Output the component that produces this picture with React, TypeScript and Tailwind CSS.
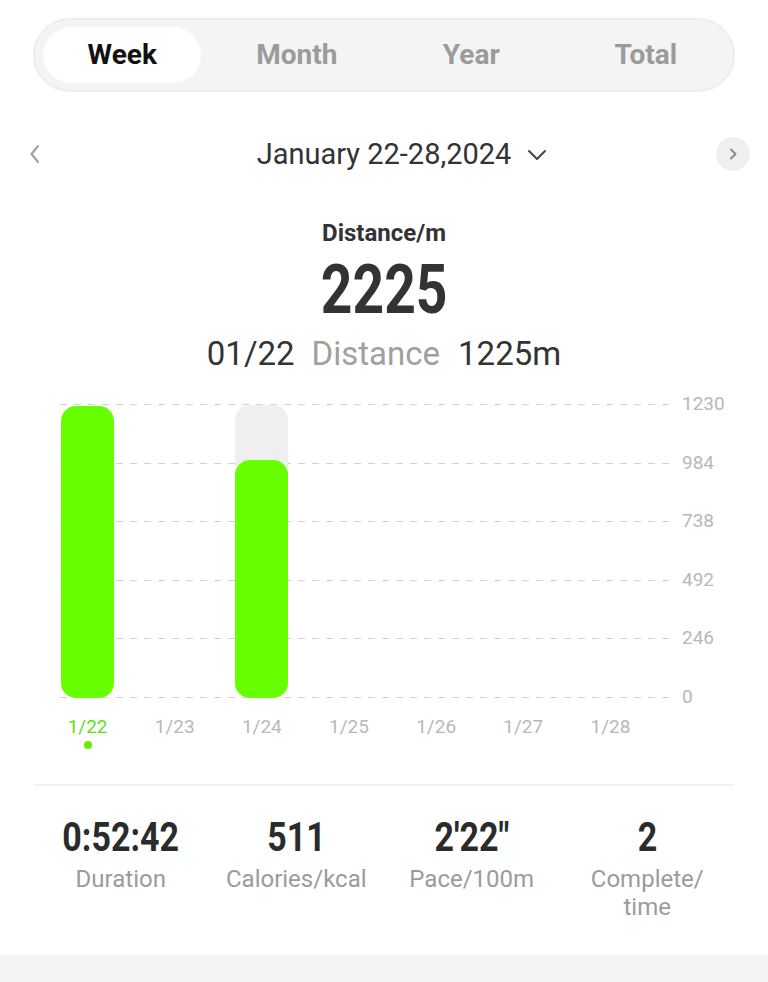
import React from 'react';

const tabs = ['Week', 'Month', 'Year', 'Total'];
const days = [
  { label: '1/22', value: 1225, active: true },
  { label: '1/23', value: 0 },
  { label: '1/24', value: 1000, track: true },
  { label: '1/25', value: 0 },
  { label: '1/26', value: 0 },
  { label: '1/27', value: 0 },
  { label: '1/28', value: 0 },
];
const ticks = ['1230', '984', '738', '492', '246', '0'];
const stats = [
  { value: '0:52:42', label: 'Duration' },
  { value: '511', label: 'Calories/kcal' },
  { value: `2'22"`, label: 'Pace/100m' },
  { value: '2', label: 'Complete/\ntime' },
];

const MAX = 1230;
const PLOT_H = 293;

export default function App() {
  return (
    <div className="w-[768px] h-[982px] bg-white flex flex-col font-['Roboto','Noto_Sans',sans-serif] overflow-hidden">
      {/* period tabs */}
      <div className="pt-[18px] px-[33px]">
        <div className="h-[74px] rounded-full bg-[#f4f4f4] border-2 border-[#ededed] grid grid-cols-4">
          {tabs.map((t, i) => (
            <div key={t} className="flex items-center justify-center">
              <div
                className={`w-[158px] h-[56px] rounded-full flex items-center justify-center text-[28px] leading-[58px] font-bold ${
                  i === 0 ? 'bg-white text-[#111]' : 'text-[#9b9b9b]'
                }`}
              >
                {t}
              </div>
            </div>
          ))}
        </div>
      </div>

      {/* date switcher */}
      <div className="mt-[42px] h-[40px] px-[18px] grid grid-cols-[34px_1fr_34px] items-center">
        <div className="w-[34px] h-[34px] flex items-center justify-center">
          <svg width="12" height="20" viewBox="0 0 12 20" fill="none">
            <path d="M9 2 L2.5 10 L9 18" stroke="#a0a0a0" strokeWidth="2" strokeLinecap="round" strokeLinejoin="round" />
          </svg>
        </div>
        <div className="flex justify-center">
          <span className="relative text-[29px] leading-[40px] text-[#333]">
            January 22-28,2024
            <svg className="absolute left-[calc(100%+16px)] top-[15px]" width="20" height="12" viewBox="0 0 20 12" fill="none">
              <path d="M2 2 L10 10 L18 2" stroke="#444" strokeWidth="2" strokeLinecap="round" strokeLinejoin="round" />
            </svg>
          </span>
        </div>
        <div className="w-[34px] h-[34px] rounded-full bg-[#efefef] flex items-center justify-center">
          <svg width="8" height="12" viewBox="0 0 8 12" fill="none">
            <path d="M2 1.5 L6.5 6 L2 10.5" stroke="#8a8a8a" strokeWidth="2" strokeLinecap="round" strokeLinejoin="round" />
          </svg>
        </div>
      </div>

      {/* summary */}
      <div className="mt-[44px] text-center text-[24px] leading-[30px] font-bold text-[#333]">Distance/m</div>
      <div className="mt-[7px] h-[70px] flex justify-center">
        <div className="scale-x-80 text-[69px] leading-[70px] font-bold text-[#333]">2225</div>
      </div>
      <div className="mt-[9px] h-[40px] flex justify-center items-center text-[33px] leading-[40px] text-[#333]">
        <span>01/22</span>
        <span className="ml-[17px] text-[#a0a0a0]">Distance</span>
        <span className="ml-[18px]">1225m</span>
      </div>

      {/* chart */}
      <div className="mt-[30px] ml-[44px] w-[610px] relative">
        <div className="absolute left-[16px] top-0 w-[610px] h-[294px] flex flex-col justify-between">
          {ticks.map((t) => (
            <div key={t} className="relative h-[1px] bg-[linear-gradient(to_right,#d2d2d2_50%,transparent_50%)] bg-[length:14px_1px]">
              <span className="absolute left-[622px] top-[-12px] text-[19px] leading-[24px] text-[#b8b8b8]">{t}</span>
            </div>
          ))}
        </div>
        <div className="relative h-[294px] grid grid-cols-7 items-end">
          {days.map((d) => (
            <div key={d.label} className="h-full flex items-end justify-center">
              {d.value > 0 && (
                <div className={`w-[53px] rounded-[15px] flex items-end ${d.track ? 'h-[293px] bg-[#efefef]' : ''}`}>
                  <div
                    className="w-full rounded-[15px] bg-[#66ff00]"
                    style={{ height: `${Math.round((d.value / MAX) * PLOT_H)}px` }}
                  />
                </div>
              )}
            </div>
          ))}
        </div>
        <div className="mt-[17px] grid grid-cols-7">
          {days.map((d) => (
            <div key={d.label} className="flex flex-col items-center">
              <span className={`text-[19px] leading-[24px] ${d.active ? 'text-[#62e00c]' : 'text-[#b8b8b8]'}`}>{d.label}</span>
              <span className={`mt-[2px] w-[8px] h-[8px] rounded-full ${d.active ? 'bg-[#66ee00]' : 'bg-transparent'}`} />
            </div>
          ))}
        </div>
      </div>

      {/* divider */}
      <div className="mt-[35px] mx-[34px] h-[2px] bg-[#f1f1f1]" />

      {/* stats */}
      <div className="mt-[30px] px-[33px] grid grid-cols-4">
        {stats.map((s) => (
          <div key={s.label} className="flex flex-col items-center">
            <div className="scale-x-85 text-[40px] leading-[44px] font-bold text-[#2b2b2b]">{s.value}</div>
            <div className="mt-[5px] text-[24px] leading-[28px] text-[#9b9b9b] text-center whitespace-pre-line">{s.label}</div>
          </div>
        ))}
      </div>

      <div className="mt-auto h-[27px] bg-[#f4f4f4]" />
    </div>
  );
}
